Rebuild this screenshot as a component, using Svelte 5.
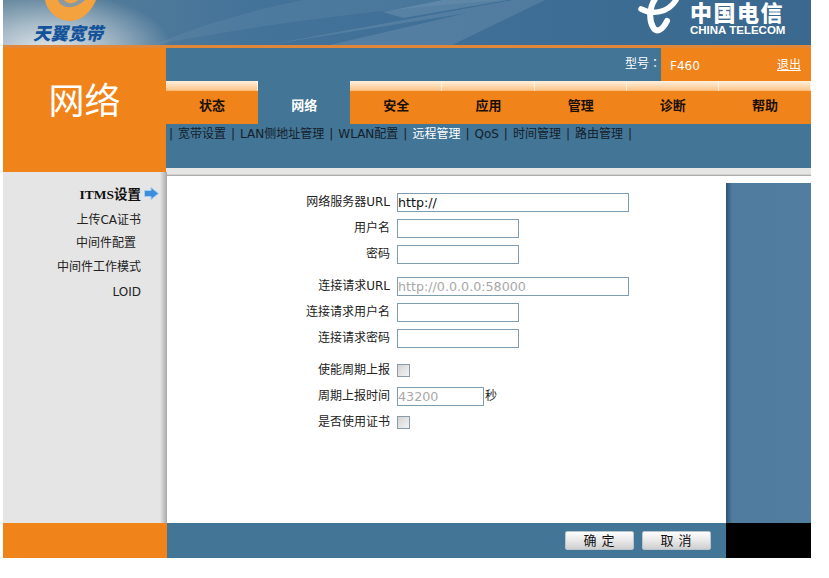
<script>
  const tabs = ['状态', '网络', '安全', '应用', '管理', '诊断', '帮助'];
  const subnav = ['宽带设置', 'LAN侧地址管理', 'WLAN配置', '远程管理', 'QoS', '时间管理', '路由管理'];
  const side = [
    { text: 'ITMS设置', active: true },
    { text: '上传CA证书' },
    { text: '中间件配置', pad: true },
    { text: '中间件工作模式' },
    { text: 'LOID', loid: true }
  ];
</script>

<div class="page">
  <header class="banner">
    <svg class="streaks" width="808" height="45" viewBox="0 0 808 45">
      <path d="M264 45 L510 0 L542 0 L449 45 L327 45 L464 13 Z" fill="#fff" opacity="0.1" />
      <path d="M150 45 C280 20 400 8 500 0 L300 0 C240 12 190 28 150 45 Z" fill="#fff" opacity="0.05" />
      <path d="M400 18 L505 0 L440 0 L380 12 Z" fill="#fff" opacity="0.12" />
    </svg>
    <div class="brand">
      <svg class="swirl" width="52" height="22" viewBox="0 0 52 22">
        <path d="M0 0 C2 12 14 21.500 26 21 C38 20.500 47 10 51 0 Z" fill="#f4a23e" />
        <path d="M13 0 C15 6 22 8.500 29 6.500 C34 5 38 2 40 0 Z" fill="#8a9aa0" />
        <path d="M19 0 C22 4 28 4.500 33 0 Z" fill="#f2a445" />
      </svg>
      <span class="brand-name">天翼宽带</span>
    </div>
    <div class="telecom">
      <svg class="emblem" width="50" height="36" viewBox="0 0 50 36" fill="none" stroke="#fff" stroke-linecap="round">
        <path d="M11 9 C22 15 38 13 46 0" stroke-width="5.500" />
        <path d="M25 -1 C19 8 19 20 23 27 C26 33 32 31 37 21" stroke-width="6" />
      </svg>
      <div class="telecom-text">
        <span class="telecom-cn">中国电信</span>
        <span class="telecom-en">CHINA TELECOM</span>
      </div>
    </div>
  </header>
  <div class="rule"></div>

  <section class="top">
    <div class="section-title">网络</div>
    <div class="top-right">
      <div class="model-bar">
        <span class="model-label">型号：</span>
        <div class="model-box">
          <span>F460</span>
          <a href="#top">退出</a>
        </div>
      </div>
      <nav class="tabs">
        {#each tabs as tab, i}
          <div class="tab" class:current={i === 1}>{tab}</div>
        {/each}
      </nav>
      <div class="subnav">
        <span class="sep">|</span>
        {#each subnav as item, i}
          <span class="sub" class:on={i === 3}>{item}</span><span class="sep">|</span>
        {/each}
      </div>
      <div class="strip"></div>
    </div>
  </section>

  <section class="body">
    <aside class="sidebar">
      {#each side as item}
        <div class="side-item" class:active={item.active} class:pad={item.pad} class:loid={item.loid}>
          {item.text}
          {#if item.active}
            <svg width="15" height="13" viewBox="0 0 15 13">
              <path d="M.5 3.5H7V.5L14.5 6.5 7 12.5V9.500H.5Z" fill="#3d8fdc" stroke="#a9cdec" />
            </svg>
          {/if}
        </div>
      {/each}
    </aside>

    <main class="content">
      <form class="form">
        <div class="row"><span class="lbl">网络服务器URL</span><input class="wide" value="http://" /></div>
        <div class="row"><span class="lbl">用户名</span><input /></div>
        <div class="row"><span class="lbl">密码</span><input /></div>

        <div class="row gap"><span class="lbl">连接请求URL</span><input class="wide" disabled value="http://0.0.0.0:58000" /></div>
        <div class="row"><span class="lbl">连接请求用户名</span><input /></div>
        <div class="row"><span class="lbl">连接请求密码</span><input /></div>

        <div class="row gap"><span class="lbl">使能周期上报</span><span class="check"></span></div>
        <div class="row"><span class="lbl">周期上报时间</span><input class="short" disabled value="43200" /><span class="unit">秒</span></div>
        <div class="row"><span class="lbl">是否使用证书</span><span class="check"></span></div>
      </form>
    </main>

    <div class="right-col"></div>
  </section>

  <footer class="foot">
    <div class="foot-left"></div>
    <div class="foot-mid">
      <button type="button">确 定</button>
      <button type="button">取 消</button>
    </div>
    <div class="foot-right"></div>
  </footer>
</div>

<style>
  :global(body) {
    margin: 0;
    background: #fff;
  }

  .page {
    width: 808px;
    margin-left: 3px;
    font-family: "DejaVu Sans", "Noto Sans CJK SC", sans-serif;
    font-size: 12px;
    color: #222;
  }

  .banner {
    position: relative;
    height: 45px;
    overflow: hidden;
    background:
      radial-gradient(ellipse 125px 58px at 45px 50px, #dfe6ea 0%, #a9bcc9 45%, rgba(110, 145, 170, 0) 100%),
      linear-gradient(90deg, #5d8199 0%, #44739a 30%, #3f6f96 60%, #3a688f 100%);
  }

  .streaks {
    position: absolute;
    left: 0;
    top: 0;
  }

  .brand {
    position: absolute;
    left: 0;
    top: 0;
    width: 130px;
    height: 45px;
  }

  .swirl {
    position: absolute;
    left: 42px;
    top: 0;
  }

  .brand-name {
    position: absolute;
    left: 30px;
    top: 23px;
    font-family: "Noto Sans CJK SC", sans-serif;
    font-size: 17.500px;
    line-height: 20px;
    font-weight: 900;
    font-style: italic;
    color: #14529a;
  }

  .telecom {
    position: absolute;
    left: 627px;
    top: 0;
    display: flex;
    gap: 9px;
    color: #fff;
  }

  .telecom-text {
    display: flex;
    flex-direction: column;
    align-items: flex-start;
    margin-left: 1px;
  }

  .telecom-cn {
    font-family: "Noto Sans CJK SC", sans-serif;
    font-size: 22px;
    line-height: 22px;
    font-weight: 900;
    letter-spacing: 1.500px;
    white-space: nowrap;
  }

  .telecom-en {
    margin-top: 2px;
    font-family: "Liberation Sans", sans-serif;
    font-size: 11.500px;
    line-height: 12px;
    font-weight: 700;
    white-space: nowrap;
  }

  .rule {
    height: 3px;
    background: #e0873a;
  }

  .top {
    display: flex;
    height: 128px;
  }

  .section-title {
    width: 163px;
    height: 124px;
    box-sizing: border-box;
    padding: 25px 0 0 0;
    background: #f0841a;
    color: #fff;
    text-align: center;
    font-family: "Noto Sans CJK SC", sans-serif;
    font-size: 36px;
    line-height: 50px;
  }

  .top-right {
    flex: 1;
    display: flex;
    flex-direction: column;
    background: #437596;
  }

  .model-bar {
    height: 33px;
    display: flex;
    justify-content: flex-end;
    align-items: stretch;
  }

  .model-label {
    padding-top: 6px;
    font-family: "Noto Sans CJK JP", sans-serif;
    color: #fff;
    line-height: 18px;
  }

  .model-box {
    width: 150px;
    display: flex;
    justify-content: space-between;
    align-items: center;
    box-sizing: border-box;
    padding: 0 10px 0 9px;
    background: #f0841a;
    color: #fff;
  }

  .model-box span {
    font-size: 12px;
    padding-top: 2px;
  }

  .model-box a {
    color: #fff;
    text-decoration: underline;
    margin-bottom: 3px;
  }

  .tabs {
    display: grid;
    grid-template-columns: repeat(7, 1fr);
    height: 43px;
  }

  .tab {
    box-sizing: border-box;
    padding-top: 14px;
    background:
      linear-gradient(90deg, transparent calc(100% - 1px), rgba(255, 255, 255, 0.55) 0) 0 0 / 100% 10px no-repeat,
      linear-gradient(180deg, #fff1df 0, #fbc68c 9px, #f9b56d 10px, #f0841a 10px);
    color: #1a1008;
    text-align: center;
    font-family: "Noto Sans CJK SC", sans-serif;
    font-size: 13px;
    line-height: 20px;
    font-weight: 700;
  }

  .tab.current {
    background: #437596;
    color: #fff;
  }

  .subnav {
    height: 44px;
    box-sizing: border-box;
    padding: 1px 0 0 3px;
    display: flex;
    gap: 5px;
    line-height: 18px;
    color: #14202a;
  }

  .sub.on {
    color: #fff;
  }

  .strip {
    height: 8px;
    background: linear-gradient(180deg, #e6e6e4 0, #e6e6e4 6px, #999 8px);
  }

  .body {
    display: flex;
    margin-top: -4px;
    height: 351px;
  }

  .sidebar {
    width: 164px;
    box-sizing: border-box;
    padding-top: 12px;
    background: linear-gradient(90deg, #e5e5e5 0, #e5e5e5 157px, #a8a8a8 164px);
  }

  .side-item {
    height: 23.500px;
    padding-right: 26px;
    text-align: right;
    line-height: 24px;
    color: #222;
  }

  .side-item.active {
    position: relative;
    font-family: "Liberation Serif", "Noto Sans CJK SC", serif;
    font-weight: 700;
    font-size: 13.500px;
    line-height: 22px;
    color: #111;
  }

  .side-item.active svg {
    position: absolute;
    left: 141px;
    top: 3px;
  }

  .side-item.pad {
    padding-right: 31px;
  }

  .side-item.loid {
    margin-top: 1.500px;
  }

  .content {
    width: 559px;
    margin-top: 4px;
    box-sizing: border-box;
    padding-top: 17px;
    background: #fff;
  }

  .form {
    display: flex;
    flex-direction: column;
    gap: 7px;
  }

  .row {
    display: flex;
    align-items: center;
    height: 19px;
  }

  .row.gap {
    margin-top: 6px;
  }

  .lbl {
    width: 223px;
    margin-right: 7px;
    padding-bottom: 4px;
    text-align: right;
    white-space: nowrap;
    color: #222;
  }

  input {
    width: 122px;
    height: 19px;
    box-sizing: border-box;
    margin: 0;
    padding: 0;
    border: 1px solid #7f9db0;
    border-radius: 0;
    outline: none;
    background: #fff;
    font-family: "DejaVu Sans", sans-serif;
    font-size: 12.700px;
    color: #111;
  }

  input.wide {
    width: 232px;
  }

  input.short {
    width: 87px;
  }

  input:disabled {
    color: #a8a8a8;
    background: #fff;
  }

  .unit {
    margin-left: 1px;
    padding-bottom: 5px;
  }

  .check {
    width: 11px;
    height: 11px;
    border: 1px solid #8a9aa6;
    background: linear-gradient(135deg, #d4d4d4, #f3f3f3);
  }

  .right-col {
    width: 85px;
    margin-top: 11px;
    background: linear-gradient(90deg, #2f5270 0, #4f7c9f 6px, #517d9f 100%);
  }

  .foot {
    display: flex;
    height: 35px;
  }

  .foot-left {
    width: 164px;
    background: #f0841a;
  }

  .foot-mid {
    width: 559px;
    box-sizing: border-box;
    display: flex;
    justify-content: flex-end;
    align-items: flex-start;
    gap: 8px;
    padding: 8px 15px 0 0;
    background: #437596;
  }

  .foot-right {
    width: 85px;
    background: #000;
  }

  button {
    width: 69px;
    height: 19px;
    padding: 0 0 2px;
    border: 1px solid #b9c4cc;
    border-radius: 2px;
    background: linear-gradient(180deg, #fdfdfd 0, #e8e8e8 50%, #cfcfcf 100%);
    font-family: "Noto Sans CJK SC", sans-serif;
    font-size: 13px;
    line-height: 15px;
    letter-spacing: 1px;
    color: #111;
  }
</style>
